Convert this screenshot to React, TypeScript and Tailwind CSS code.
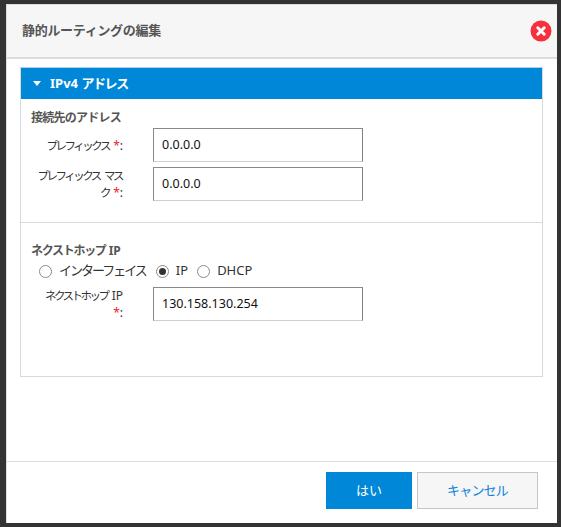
const font = { fontFamily: '"Noto Sans", "Noto Sans CJK JP", sans-serif' };

function Kana({ children }: { children: React.ReactNode }) {
  return <span className="mr-[1px] text-[11.5px] tracking-[-2.5px]">{children}</span>;
}

function Req() {
  return (
    <>
      <span className="text-[#e8262a]">*</span>:
    </>
  );
}

function Field({ label, value }: { label: React.ReactNode; value: string }) {
  return (
    <div className="flex items-center">
      <label className="w-[102px] shrink-0 text-right text-[12px] leading-[17px] text-[#333]">{label}</label>
      <div className="ml-[30px] flex h-[34px] w-[210px] items-center border border-[#8a8a8a] border-b-[#cfcfcf] border-r-[#808080] bg-white pl-[8px] text-[12.5px] text-[#111]">
        {value}
      </div>
    </div>
  );
}

function Radio({ label, checked, narrow }: { label: string; checked?: boolean; narrow?: boolean }) {
  return (
    <div className="flex items-center">
      <span className="flex h-[13px] w-[13px] items-center justify-center rounded-full border border-[#8a8a8a] bg-white">
        {checked && <span className="h-[7px] w-[7px] rounded-full bg-[#333]" />}
      </span>
      <span className={narrow ? "ml-[7px] mr-[1px] text-[13px] tracking-[-2px] text-[#333]" : "ml-[7px] text-[13px] text-[#333]"}>{label}</span>
    </div>
  );
}

export default function App() {
  return (
    <div className="h-[527px] w-[561px] bg-[#333] pb-[4px] pl-[6px] pr-[4px] pt-[4px]" style={font}>
      <div className="flex h-full flex-col border-l border-t border-[#ddd] bg-white">
        <div className="flex h-[54px] shrink-0 items-center justify-between border-b-2 border-[#ddd] bg-[#f6f6f6] pl-[15px] pr-[5px]">
          <span className="text-[13px] font-bold tracking-[-0.3px] text-[#555]">静的ルーティングの編集</span>
          <svg width="22" height="22" viewBox="0 0 22 22" className="mt-[-1px]">
            <circle cx="11" cy="11" r="10.5" fill="#f7303e" />
            <path d="M7.8 7.8l6.4 6.4M14.2 7.8l-6.4 6.4" stroke="#fff" strokeWidth="3" strokeLinecap="round" />
          </svg>
        </div>

        <div className="ml-[13px] mr-[14px] mt-[8px] h-[310px] border border-[#d5dadd] border-t-[#a8d0ec]">
          <div className="flex h-[31px] items-center bg-[#0087d8] pl-[12px] text-white">
            <svg width="8" height="5" viewBox="0 0 8 5" className="mr-[9px]">
              <path d="M0 0h8L4 5z" fill="#fff" />
            </svg>
            <span className="text-[13px] font-bold">
              IPv4 <span className="tracking-[-1.4px]">アドレス</span>
            </span>
          </div>

          <div className="flex h-[124px] flex-col border-b border-[#d5dadd] pt-[10px]">
            <div className="pl-[10px] text-[12px] font-bold leading-[18px] tracking-[-0.75px] text-[#555]">接続先のアドレス</div>
            <div className="mt-[1px] flex flex-col gap-[5px]">
              <Field label={<><Kana>プレフィックス</Kana> <Req /></>} value="0.0.0.0" />
              <Field label={<><Kana>プレフィックス</Kana> <Kana>マス</Kana><br /><Kana>ク</Kana> <Req /></>} value="0.0.0.0" />
            </div>
          </div>

          <div className="pt-[19px]">
            <div className="pl-[10px] text-[12px] font-bold leading-[18px] text-[#555]">
              <span className="tracking-[-1.3px]">ネクストホップ</span> IP
            </div>
            <div className="mb-[6px] mt-[1px] flex h-[20px] items-center gap-[9px] pl-[18px]">
              <Radio label="インターフェイス" narrow />
              <Radio label="IP" checked />
              <Radio label="DHCP" />
            </div>
            <Field label={<><Kana>ネクストホップ</Kana> IP<br /><Req /></>} value="130.158.130.254" />
          </div>
        </div>

        <div className="mt-auto flex h-[62px] shrink-0 justify-end gap-[5px] border-t border-[#ddd] pr-[19px] pt-[10px]">
          <button className="h-[37px] w-[86px] bg-[#0087d8] text-[13px] text-white">はい</button>
          <button className="h-[37px] w-[121px] border border-[#c6c6c6] bg-[#f6f6f6] text-[13px] tracking-[-0.8px] text-[#0b82dc]">キャンセル</button>
        </div>
      </div>
    </div>
  );
}
